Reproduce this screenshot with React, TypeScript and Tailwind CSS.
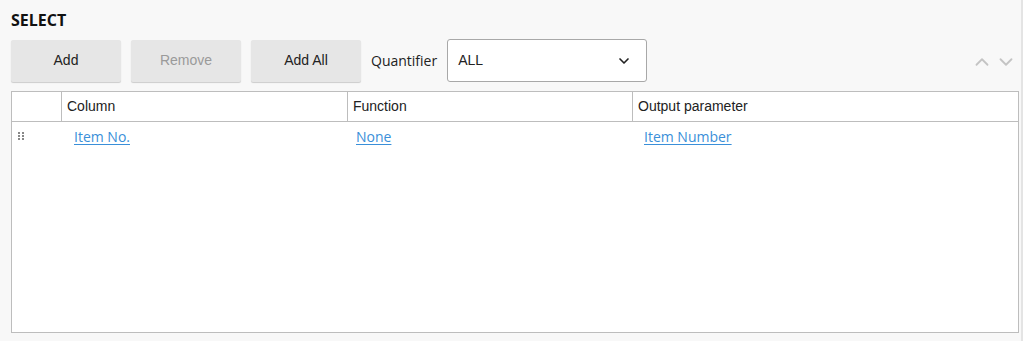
import { ChevronDown, ChevronUp } from "lucide-react";

const open = "font-['Open_Sans',sans-serif]";
const arial = "font-['Liberation_Sans',Arial,sans-serif]";

function Btn({ label, disabled }: { label: string; disabled?: boolean }) {
  return (
    <button
      className={`w-[110px] h-[42px] rounded-[2px] bg-[#e6e6e6] shadow-[0_1px_1px_rgba(0,0,0,0.18)] text-[14px] ${arial} ${
        disabled ? "text-[#9a9a9a]" : "text-[#222]"
      }`}
    >
      {label}
    </button>
  );
}

function Grip() {
  return (
    <div className="grid grid-cols-2 gap-x-[2px] gap-y-[1px] w-[6px]">
      {[0, 1, 2, 3, 4, 5].map((i) => (
        <span key={i} className="w-[2px] h-[2px] bg-[#888]" />
      ))}
    </div>
  );
}

export default function App() {
  const link = `text-[14px] text-[#3a8fd9] underline underline-offset-2 ${open}`;
  return (
    <div className="w-[1023px] h-[341px] bg-[#f8f8f8] border-r-2 border-[#e4e4e4] pl-[11px] pr-[2px] overflow-hidden">
      <h1 className={`pt-[8px] h-[39px] text-[16px] font-bold text-[#111] ${open}`}>SELECT</h1>

      <div className="flex items-center gap-[10px] h-[43px]">
        <Btn label="Add" />
        <Btn label="Remove" disabled />
        <Btn label="Add All" />
        <span className={`text-[14px] text-[#222] ${open}`}>Quantifier</span>
        <div className="w-[200px] h-[43px] border border-[#a8a8a8] rounded-[3px] bg-white flex items-center justify-between pl-[10px] pr-[14px]">
          <span className={`text-[14px] text-[#222] ${arial}`}>ALL</span>
          <ChevronDown size={16} strokeWidth={2.5} className="text-[#222]" />
        </div>
        <div className="ml-auto flex items-center gap-[2px] pr-[2px] pt-[2px] text-[#c4c4c4]">
          <ChevronUp size={22} strokeWidth={2} />
          <ChevronDown size={22} strokeWidth={2} />
        </div>
      </div>

      <div className="mt-[9px] w-full h-[242px] border border-[#bdbdbd] bg-white">
        <div className={`flex h-[30px] border-b border-[#bdbdbd] text-[14px] text-[#222] ${arial}`}>
          <div className="w-[50px] border-r border-[#bdbdbd]" />
          <div className="w-[286px] border-r border-[#bdbdbd] pl-[5px] flex items-center">Column</div>
          <div className="w-[285px] border-r border-[#bdbdbd] pl-[5px] flex items-center">Function</div>
          <div className="flex-1 pl-[5px] flex items-center">Output parameter</div>
        </div>
        <div className="flex h-[27px] items-center">
          <div className="w-[50px] pl-[6px] pt-[1px]">
            <Grip />
          </div>
          <div className="w-[286px] pl-[12px]">
            <a className={link}>Item No.</a>
          </div>
          <div className="w-[285px] pl-[8px]">
            <a className={link}>None</a>
          </div>
          <div className="flex-1 pl-[11px]">
            <a className={link}>Item Number</a>
          </div>
        </div>
      </div>
    </div>
  );
}
